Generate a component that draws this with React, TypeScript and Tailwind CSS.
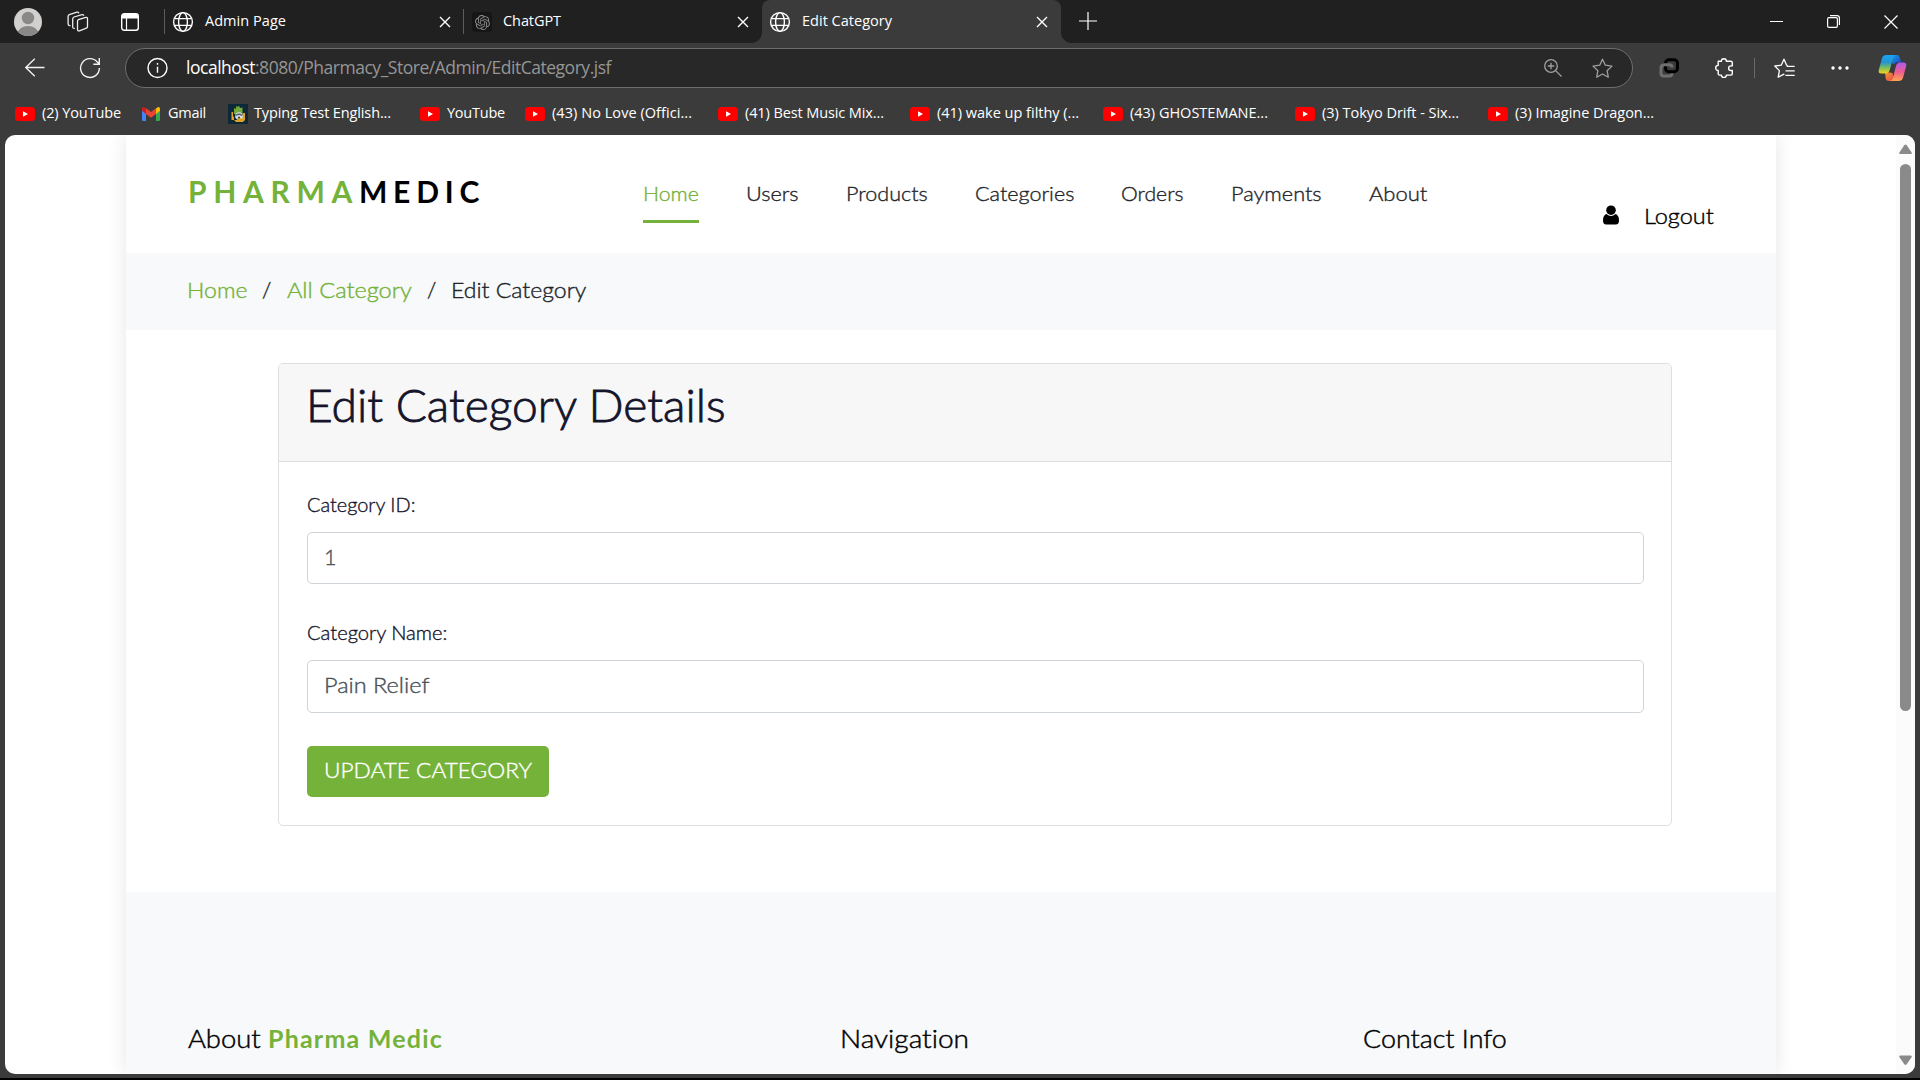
import { useLayoutEffect, useRef, useState } from "react";
import type { ReactNode } from "react";

const UI = "font-['Open_Sans','Noto_Sans',sans-serif]";
const PAGE = "font-['Lato','Noto_Sans',sans-serif] font-light [font-variant-ligatures:none]";

/* A single line of text whose tracking is adjusted so it fills a given width. */
function Fit({ w, className = "", children }: { w: number; className?: string; children: string }) {
  const ref = useRef<HTMLSpanElement>(null);
  const [spacing, setSpacing] = useState(0);
  useLayoutEffect(() => {
    const el = ref.current;
    if (!el) return;
    el.style.letterSpacing = "0px";
    const natural = el.getBoundingClientRect().width;
    const s = (w - natural) / children.length;
    el.style.letterSpacing = s + "px";
    setSpacing(s);
  }, [w, children]);
  return (
    <span className={"inline-flex shrink-0 whitespace-pre " + className} style={{ width: w }}>
      <span ref={ref} style={{ letterSpacing: spacing }}>{children}</span>
    </span>
  );
}

/* A single line of light text, slightly thickened, whose letterforms are widened to fill a given width. */
function Wide({ w, className = "", children }: { w: number; className?: string; children: string }) {
  const ref = useRef<HTMLSpanElement>(null);
  const [scale, setScale] = useState(1);
  useLayoutEffect(() => {
    if (ref.current) setScale(w / ref.current.offsetWidth);
  }, [w, children]);
  return (
    <span className={"inline-flex shrink-0 whitespace-pre " + className} style={{ width: w }}>
      <span
        ref={ref}
        className="inline-block origin-left [-webkit-text-stroke-width:0.018em]"
        style={{ transform: `scaleX(${scale})` }}
      >
        {children}
      </span>
    </span>
  );
}

function Globe() {
  return (
    <svg className="size-[22px] shrink-0" viewBox="0 0 22 22" fill="none" stroke="#fff" strokeWidth="1.4">
      <circle cx="11" cy="11" r="9.4" />
      <ellipse cx="11" cy="11" rx="4.4" ry="9.4" />
      <path d="M2.4 7.6h17.2M2.4 14.4h17.2" />
    </svg>
  );
}

function Close() {
  return (
    <svg className="size-3 shrink-0" viewBox="0 0 12 12" stroke="#fff" strokeWidth="1.4">
      <path d="M1 1l10 10M11 1L1 11" />
    </svg>
  );
}

function ChatGpt() {
  return (
    <span className="flex size-5 shrink-0 items-center justify-center rounded-[3px] bg-[#161616]">
      <svg className="size-[15px]" viewBox="0 0 24 24" fill="#8a8a8a">
        <path d="M22.28 9.82a5.98 5.98 0 0 0-.52-4.91 6.05 6.05 0 0 0-6.51-2.9A6.07 6.07 0 0 0 4.98 4.18a5.98 5.98 0 0 0-4 2.9 6.05 6.05 0 0 0 .74 7.1 5.98 5.98 0 0 0 .51 4.91 6.05 6.05 0 0 0 6.51 2.9A5.98 5.98 0 0 0 13.26 24a6.06 6.06 0 0 0 5.77-4.21 5.99 5.99 0 0 0 4-2.9 6.06 6.06 0 0 0-.75-7.07zm-9.02 12.61a4.48 4.48 0 0 1-2.88-1.04l.14-.08 4.78-2.76a.8.8 0 0 0 .39-.68v-6.74l2.02 1.17a.07.07 0 0 1 .04.05v5.58a4.5 4.5 0 0 1-4.49 4.5zM3.6 18.3a4.47 4.47 0 0 1-.53-3.01l.14.08 4.78 2.76a.77.77 0 0 0 .78 0l5.84-3.37v2.33a.08.08 0 0 1-.03.06L9.74 19.95A4.5 4.5 0 0 1 3.6 18.3zM2.34 7.9a4.49 4.49 0 0 1 2.37-1.97v5.67a.77.77 0 0 0 .39.68l5.81 3.35-2.02 1.17a.08.08 0 0 1-.07 0L4 14.01A4.5 4.5 0 0 1 2.34 7.9zm16.6 3.86L13.1 8.36l2.02-1.16a.08.08 0 0 1 .07 0l4.83 2.79a4.49 4.49 0 0 1-.68 8.1v-5.68a.79.79 0 0 0-.4-.65zm2.01-3.03l-.14-.08-4.77-2.78a.78.78 0 0 0-.79 0L9.41 9.23V6.9a.07.07 0 0 1 .03-.06l4.83-2.79a4.5 4.5 0 0 1 6.68 4.68zM8.31 12.86l-2.02-1.16a.08.08 0 0 1-.04-.06V6.07a4.5 4.5 0 0 1 7.38-3.45l-.14.08-4.78 2.76a.8.8 0 0 0-.4.68zm1.1-2.36L12 9l2.61 1.5v3L12 15l-2.6-1.5z" />
      </svg>
    </span>
  );
}

function Profile() {
  return (
    <svg className="size-7 shrink-0" viewBox="0 0 28 28">
      <clipPath id="avatar"><circle cx="14" cy="14" r="14" /></clipPath>
      <g clipPath="url(#avatar)">
        <path fill="#d2d0ce" d="M0 0h28v28H0z" />
        <circle cx="14" cy="10" r="6.2" fill="#8a8886" />
        <ellipse cx="14" cy="26" rx="10.5" ry="8" fill="#8a8886" />
      </g>
    </svg>
  );
}

function Workspaces() {
  return (
    <svg className="h-[22px] w-[22px] shrink-0" viewBox="0 0 22 22" fill="none" stroke="#eee" strokeWidth="1.3" strokeLinejoin="round" strokeLinecap="round">
      <path d="M11.4 8.6l7.4-2.2q1.7-.4 1.7 1.2v8q0 1.2-1.1 1.6l-7 2.6q-1.9.6-1.9-1.2v-8q0-1.5.9-2z" />
      <path d="M7.3 17.4q-1.6 0-1.6-1.5V8q0-1.5 1.3-2l8-2.4q1.3-.3 1.7.8" />
      <path d="M3 14.7q-1.9-.1-1.9-1.7V5.4q0-1.3 1.2-1.8l7.7-2.4q1.2-.3 1.7.7" />
    </svg>
  );
}

function TabActions() {
  return (
    <svg className="size-[18px] shrink-0" viewBox="0 0 18 18" fill="none">
      <rect x=".7" y=".7" width="16.6" height="16.6" rx="2.5" stroke="#fff" strokeWidth="1.4" />
      <path d="M1 3q0-2 2-2h12q2 0 2 2v2.5H1z" fill="#fff" />
      <path d="M5.5 5v12" stroke="#fff" strokeWidth="1.2" />
    </svg>
  );
}

function TabStrip() {
  return (
    <div className="flex h-[43px] shrink-0 items-center bg-[#202020] pl-[14px] pr-[22px]">
      <Profile />
      <span className="ml-[25px] flex"><Workspaces /></span>
      <span className="ml-[32px] flex"><TabActions /></span>
      <span className="ml-[25px] h-[25px] w-px bg-[#5c5c5c]" />
      <span className="ml-[7px] mt-px flex"><Globe /></span>
      <Fit w={81} className="ml-[11px] pb-[2px] text-[14.5px]">Admin Page</Fit>
      <span className="ml-[153px] mt-px flex"><Close /></span>
      <span className="ml-[12px] h-[25px] w-px bg-[#5c5c5c]" />
      <span className="ml-[8px] mt-px flex"><ChatGpt /></span>
      <Fit w={58} className="ml-[11px] pb-[2px] text-[14.5px]">ChatGPT</Fit>
      <span className="ml-[176px] mt-px flex"><Close /></span>
      <div className="relative ml-[13px] flex h-[43px] w-[299px] items-center rounded-t-[8px] bg-[#3b3b3b] pl-[7px] pr-[13px]">
        <span className="absolute -left-[10px] bottom-0 size-[10px] bg-[radial-gradient(circle_at_0_0,#202020_9.5px,#3b3b3b_10px)]" />
        <span className="absolute -right-[10px] bottom-0 size-[10px] bg-[radial-gradient(circle_at_100%_0,#202020_9.5px,#3b3b3b_10px)]" />
        <span className="mt-px flex"><Globe /></span>
        <Fit w={90} className="ml-[11px] pb-[2px] text-[14.5px]">Edit Category</Fit>
        <span className="ml-auto mt-px flex"><Close /></span>
      </div>
      <svg className="mb-[2px] ml-[18px] size-[18px]" viewBox="0 0 18 18" stroke="#fff" strokeWidth="1.2">
        <path d="M9 0v18M0 9h18" />
      </svg>
      <div className="ml-auto flex items-center">
        <span className="h-px w-[13px] bg-white" />
        <svg className="ml-[44px] size-[13px]" viewBox="0 0 13 13" fill="none" stroke="#fff" strokeWidth="1.2">
          <rect x=".6" y="2.6" width="9.8" height="9.8" rx="1.4" />
          <path d="M3 .6h7q2.4 0 2.4 2.4v7" />
        </svg>
        <svg className="ml-[44px] size-[14px]" viewBox="0 0 14 14" stroke="#fff" strokeWidth="1.2">
          <path d="M.5.5l13 13M13.5.5l-13 13" />
        </svg>
      </div>
    </div>
  );
}

function Star({ lines = false }: { lines?: boolean }) {
  return lines ? (
    <svg className="h-[21px] w-[21px] shrink-0" viewBox="0 0 21 21" fill="none" stroke="#fff" strokeWidth="1.3" strokeLinejoin="round" strokeLinecap="round">
      <path d="M13.2 7.3l-.7-.2L10 1.2 7.2 7.2.8 8l4.6 4.6L4.2 19.2l5.8-3" />
      <path d="M13.2 8.3h7M12 12.9h8.2M12 17.4h8.2" />
    </svg>
  ) : (
    <svg className="h-[21px] w-[21px] shrink-0" viewBox="0 0 21 21" fill="none" stroke="#a0a0a0" strokeWidth="1.3" strokeLinejoin="round">
      <path d="M10.5 1.2l2.8 6 6.7.9-4.9 4.6 1.2 6.5-5.8-3.2-5.8 3.2 1.2-6.5L1 8.1l6.7-.9z" />
    </svg>
  );
}

function Copilot() {
  return (
    <svg className="h-[28px] w-[29px] shrink-0" viewBox="0 0 29 28">
      <defs>
        <linearGradient id="cpLeft" x1="0" y1="0" x2="0" y2="1">
          <stop offset="0" stopColor="#18a5f5" /><stop offset=".4" stopColor="#2594d0" /><stop offset=".7" stopColor="#7dc05a" /><stop offset="1" stopColor="#f7d21e" />
        </linearGradient>
        <linearGradient id="cpRight" x1="0" y1="0" x2="0" y2="1">
          <stop offset="0" stopColor="#a95cf0" /><stop offset=".5" stopColor="#ee5b93" /><stop offset="1" stopColor="#ffa64d" />
        </linearGradient>
        <linearGradient id="cpTop" x1="0" y1="0" x2="1" y2="1">
          <stop offset="0" stopColor="#169be8" /><stop offset="1" stopColor="#1f43c4" />
        </linearGradient>
        <linearGradient id="cpBottom" x1="0" y1="0" x2="1" y2="1">
          <stop offset="0" stopColor="#f3982d" /><stop offset="1" stopColor="#e5484d" />
        </linearGradient>
      </defs>
      <path d="M14 1h5q2 0 2.7 2.2l1.5 5H19q-2 0-2.8 2L14 9z" fill="url(#cpTop)" />
      <path d="M7 18.5h5L14.5 19 16 27h-5.5q-2 0-2.7-2.2z" fill="url(#cpBottom)" />
      <path d="M8.5 1H18q-2 0-2.8 2.7L11.7 16Q10.7 19.5 7.5 19.5h-4Q0 19.5.8 16L4 4.3Q5 1 8.5 1z" fill="url(#cpLeft)" />
      <path d="M20.5 27H12q2 0 2.8-2.7L18 12Q19 8.5 22 8.5h3.5q3.5 0 2.7 3.5L25 23.7Q24 27 20.5 27z" fill="url(#cpRight)" />
    </svg>
  );
}

function Toolbar() {
  return (
    <div className="flex h-[50px] shrink-0 items-center pl-[25px] pr-[13px]">
      <svg className="h-5 w-5 shrink-0" viewBox="0 0 20 20" fill="none" stroke="#f2f2f2" strokeWidth="1.3">
        <path d="M19.5 9.5H.8M9.800.8L.8 9.500l9 8.700" />
      </svg>
      <svg className="ml-[34px] h-[22px] w-[22px] shrink-0" viewBox="0 0 22 22" fill="none" stroke="#f2f2f2" strokeWidth="1.4">
        <path d="M20.4 11A9.4 9.4 0 1 1 18.3 5.1L20.5 7M20.3 1v6.2h-6" />
      </svg>
      <div className="ml-[24px] flex h-10 w-[1508px] items-center rounded-full border border-[#6e6e6e] bg-[#282828] pl-[20px] pr-[19px]">
        <svg className="size-[22px] shrink-0" viewBox="0 0 22 22" fill="none" stroke="#fff" strokeWidth="1.4">
          <circle cx="11.5" cy="11" r="9.5" />
          <path d="M11.5 9.7v6M11.5 6v1.8" />
        </svg>
        <Fit w={69} className="ml-[18px] pb-[2px] text-[17.5px] text-white">localhost</Fit>
        <Fit w={356} className="pb-[2px] text-[17.5px] text-[#969696]">:8080/Pharmacy_Store/Admin/EditCategory.jsf</Fit>
        <svg className="ml-auto size-[18px]" viewBox="0 0 18 18" fill="none" stroke="#a0a0a0" strokeWidth="1.3">
          <circle cx="7" cy="7" r="6.3" />
          <path d="M11.6 11.6l5.9 5.9M7 3.8v6.4M3.8 7h6.4" />
        </svg>
        <span className="ml-[30px] flex"><Star /></span>
      </div>
      <svg className="ml-[26px] size-5 shrink-0" viewBox="0 0 20 20" fill="none" strokeWidth="3">
        <path d="M13 15q0 3-3 3H5q-3 0-3-3v-5q0-3 3-3h1" stroke="#6f6f6f" />
        <rect x="6.5" y="1.7" width="12" height="12" rx="3.5" stroke="#000" />
        <path d="M5 6.7h5q3 0 3 2.8" stroke="#6f6f6f" />
      </svg>
      <svg className="ml-[35px] size-5 shrink-0" viewBox="0 0 20 20" fill="none" stroke="#fff" strokeWidth="1.4" strokeLinejoin="round">
        <path d="M4.2 3.3h3.2a2.5 2.5 0 0 1 5 0h4.5q1.4 0 1.4 1.4v3.2h-1.4a2.3 2.3 0 0 0 0 4.6h1.4v3.2q0 1.4-1.4 1.4h-4.5a2.5 2.5 0 0 1-5 0H5.6q-1.4 0-1.4-1.4v-3.3a2.5 2.5 0 0 1 0-5z" />
      </svg>
      <span className="ml-[20px] h-5 w-px shrink-0 bg-[#6a6a6a]" />
      <span className="ml-[19px] flex"><Star lines /></span>
      <svg className="ml-[36px] h-[4px] w-[18px] shrink-0" viewBox="0 0 18 4" fill="#fff">
        <circle cx="2" cy="2" r="1.7" /><circle cx="9" cy="2" r="1.7" /><circle cx="16" cy="2" r="1.7" />
      </svg>
      <span className="ml-auto flex"><Copilot /></span>
    </div>
  );
}

function YouTube() {
  return (
    <svg className="h-[14px] w-5 shrink-0" viewBox="0 0 20 14">
      <rect width="20" height="14" rx="3.5" fill="#f00" />
      <path d="M8 4.2l5 2.8-5 2.8z" fill="#fff" />
    </svg>
  );
}

function Gmail() {
  return (
    <svg className="h-[14px] w-[18px] shrink-0" viewBox="0 0 18 14">
      <path d="M0 2.5v10Q0 14 1.3 14H4V5z" fill="#4285f4" />
      <path d="M18 2.5v10q0 1.5-1.3 1.5H14V5z" fill="#34a853" />
      <path d="M14 1.5V7l4-3.3V2q0-2.2-2-1.9z" fill="#fbbc04" />
      <path d="M4 7V1.3L9 5l5-3.7V7l-5 3.8z" fill="#ea4335" />
      <path d="M0 2v1.7L4 7V1.3L2.5.3Q0-.7 0 2z" fill="#c5221f" />
    </svg>
  );
}

function TypingTest() {
  return (
    <svg className="size-5 shrink-0" viewBox="0 0 20 20">
      <path fill="#0d2836" d="M0 0h20v20H0z" />
      <path fill="#73a83c" d="M6 10V4l2 1V2l2 1 1-1.5 1 2.5 2.5-.5V10z" />
      <path fill="#dfa126" d="M3.5 8H5v4l1 1v3H3.5zM15 9h2v7l-2 2H8l-2-2h7z" />
      <circle cx="11" cy="12" r="3.8" fill="#d8dce0" />
      <path d="M8 11.5q3-2.5 6 0" fill="none" stroke="#4c5c69" strokeWidth="1.4" />
      <circle cx="11" cy="15.5" r="2" fill="#dfa126" />
      <circle cx="11" cy="13.5" r="1" fill="#26404d" />
    </svg>
  );
}

const bookmarks: { icon: ReactNode; label: string; w: number; gap: string; pad: string }[] = [
  { icon: <YouTube />, label: "(2) YouTube", w: 79, gap: "ml-0", pad: "ml-[7px]" },
  { icon: <Gmail />, label: "Gmail", w: 38, gap: "ml-[21px]", pad: "ml-[8px]" },
  { icon: <TypingTest />, label: "Typing Test English...", w: 137, gap: "ml-[22px]", pad: "ml-[6px]" },
  { icon: <YouTube />, label: "YouTube", w: 58, gap: "ml-[29px]", pad: "ml-[7px]" },
  { icon: <YouTube />, label: "(43) No Love (Offici...", w: 140, gap: "ml-[20px]", pad: "ml-[7px]" },
  { icon: <YouTube />, label: "(41) Best Music Mix...", w: 139, gap: "ml-[26px]", pad: "ml-[7px]" },
  { icon: <YouTube />, label: "(41) wake up filthy (...", w: 142, gap: "ml-[26px]", pad: "ml-[7px]" },
  { icon: <YouTube />, label: "(43) GHOSTEMANE...", w: 138, gap: "ml-[24px]", pad: "ml-[7px]" },
  { icon: <YouTube />, label: "(3) Tokyo Drift - Six...", w: 137, gap: "ml-[27px]", pad: "ml-[7px]" },
  { icon: <YouTube />, label: "(3) Imagine Dragon...", w: 139, gap: "ml-[29px]", pad: "ml-[7px]" },
];

function Bookmarks() {
  return (
    <div className="flex h-[42px] shrink-0 items-center pb-[2px] pl-[15px] text-[14.5px]">
      {bookmarks.map((b, i) => (
        <div key={i} className={"flex items-center " + b.gap}>
          <span className="mt-px flex">{b.icon}</span>
          <Fit w={b.w} className={b.pad}>{b.label}</Fit>
        </div>
      ))}
    </div>
  );
}

const nav = [
  { label: "Home", w: 56 },
  { label: "Users", w: 53 },
  { label: "Products", w: 82 },
  { label: "Categories", w: 99 },
  { label: "Orders", w: 63 },
  { label: "Payments", w: 91 },
  { label: "About", w: 58 },
];

function SiteHeader() {
  return (
    <header className="flex h-[118px] items-start pl-[62px]">
      <div className="mt-[36px] flex h-10 items-center text-[30px] font-bold">
        <Fit w={171} className="text-[#75b239]">PHARMA</Fit>
        <Fit w={126} className="text-black">MEDIC</Fit>
      </div>
      <nav className="ml-[158px] mt-[40px] flex gap-[47px] text-[20.5px] text-[#25262a]">
        {nav.map((n, i) => (
          <span
            key={n.label}
            className={
              i === 0
                ? "flex h-[48px] items-start border-b-[3px] border-[#75b239] leading-9 text-[#75b239]"
                : "flex h-[48px] items-start leading-9"
            }
          >
            <Wide w={n.w}>{n.label}</Wide>
          </span>
        ))}
      </nav>
      <div className="ml-auto mr-[62px] mt-[65px] flex h-8 items-center text-[21.5px] text-black">
        <svg className="mb-[2px] h-[20px] w-4" viewBox="0 0 16 20">
          <circle cx="8" cy="5.2" r="4.8" />
          <path d="M3.5 9Q0 10 0 15.5q0 4 3.2 4h9.600q3.200 0 3.200-4Q16 10 12.500 9 8 12.800 3.500 9z" />
        </svg>
        <Wide w={70} className="ml-[25px]">Logout</Wide>
      </div>
    </header>
  );
}

function Breadcrumb() {
  return (
    <div className="flex h-[77px] items-center bg-[#f8f9fb] pb-[3px] pl-[61px] text-[21.5px] text-[#212529]">
      <Wide w={60} className="text-[#75b239]">Home</Wide>
      <Wide w={9} className="ml-[15px]">/</Wide>
      <Wide w={125} className="ml-[16px] text-[#75b239]">All Category</Wide>
      <Wide w={9} className="ml-[15px]">/</Wide>
      <Wide w={135} className="ml-[15px]">Edit Category</Wide>
    </div>
  );
}

function Field({ label, labelW, value, valueW, tall }: { label: string; labelW: number; value: string; valueW: number; tall?: boolean }) {
  return (
    <div>
      <div className="flex h-[26px] items-center text-[19px] text-[#14142b]">
        <Wide w={labelW}>{label}</Wide>
      </div>
      <div
        className={
          (tall ? "h-[53px] pb-[3px]" : "h-[52px] pb-[1px]") +
          " mt-[14px] flex items-center rounded-[5px] border border-[#ced4da] bg-white pl-[16px] text-[21.5px] text-[#495057]"
        }
      >
        <Wide w={valueW}>{value}</Wide>
      </div>
    </div>
  );
}

function EditCard() {
  return (
    <section className="ml-[152px] mt-[33px] h-[463px] w-[1394px] rounded-[5px] border border-[#dfdfdf] bg-white">
      <div className="flex h-[98px] items-start rounded-t-[4px] border-b border-[#dcdcdc] bg-[#f7f7f7] pl-[27px] pt-[14px]">
        <h1 className="flex h-[54px] items-center text-[44.5px] text-[#14142b]">
          <Wide w={420}>Edit Category Details</Wide>
        </h1>
      </div>
      <div className="pl-[28px] pr-[27px] pt-[30px]">
        <Field label="Category ID:" labelW={108} value="1" valueW={12} />
        <div className="mt-[36px]">
          <Field label="Category Name:" labelW={140} value="Pain Relief" valueW={106} tall />
        </div>
        <button className="mt-[33px] flex h-[51px] w-[242px] items-center rounded-[5px] bg-[#75b239] pb-[5px] pl-[17px] text-[22px] text-white">
          <Wide w={208}>UPDATE CATEGORY</Wide>
        </button>
      </div>
    </section>
  );
}

function SiteFooter() {
  return (
    <footer className="mt-[66px] h-[182px] bg-[#f8f9fb] pl-[62px] pt-[131px] text-[25px] text-black">
      <div className="flex h-8 items-center">
        <Wide w={80}>About </Wide>
        <Fit w={175} className="font-bold text-[#75b239]">Pharma Medic</Fit>
        <Wide w={129} className="ml-[397px]">Navigation</Wide>
        <Wide w={144} className="ml-[394px]">Contact Info</Wide>
      </div>
    </footer>
  );
}

function Scrollbar() {
  return (
    <div className="flex w-[19px] shrink-0 flex-col items-center bg-[#fbfbfb] pt-[9px]">
      <svg className="h-[11px] w-[13px]" viewBox="0 0 13 11" fill="#8a8a8a"><path d="M5.3 1.2q1.2-1.6 2.4 0l4.8 7q.8 1.8-1 1.8h-10q-1.8 0-1-1.8z" /></svg>
      <div className="mt-[9px] h-[547px] w-[11px] rounded-full bg-[#8a8a8a]" />
      <svg className="mt-[344px] h-[11px] w-[13px]" viewBox="0 0 13 11" fill="#8a8a8a"><path d="M5.3 9.3q1.2 1.6 2.4 0l4.8-7q.8-1.8-1-1.8h-10q-1.8 0-1 1.8z" /></svg>
    </div>
  );
}

export default function App() {
  return (
    <div className={"flex h-[1080px] w-[1920px] flex-col overflow-hidden border-b-2 border-black bg-[#3b3b3b] text-white " + UI}>
      <TabStrip />
      <Toolbar />
      <Bookmarks />
      <div className={"ml-[5px] flex h-[939px] w-[1910px] shrink-0 overflow-hidden rounded-[10px] bg-white " + PAGE}>
        <div className="flex-1 overflow-hidden">
          <main className="ml-[121px] h-full w-[1650px] bg-white shadow-[0_0_18px_rgba(0,0,0,0.1)]">
            <SiteHeader />
            <Breadcrumb />
            <EditCard />
            <SiteFooter />
          </main>
        </div>
        <Scrollbar />
      </div>
    </div>
  );
}
